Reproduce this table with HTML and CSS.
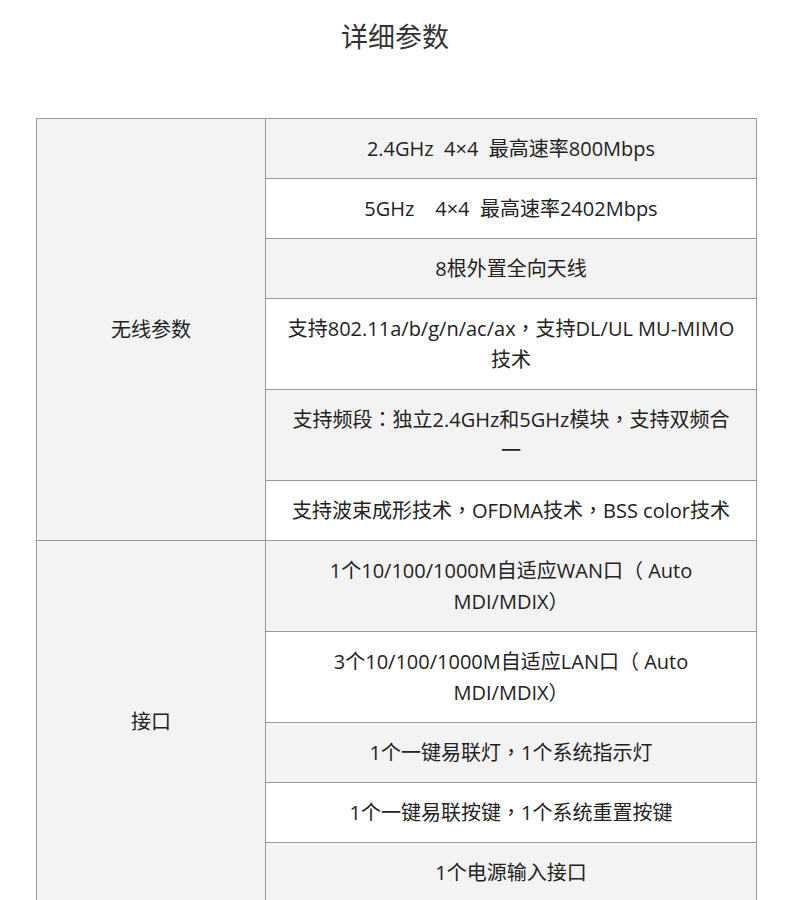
FILE: index.html
```html
<!DOCTYPE html>
<html lang="zh-CN">
<head>
<meta charset="utf-8">
<link rel="stylesheet" href="styles.css">
</head>
<body>
<h2 class="title">详细参数</h2>
<table class="spec">
  <colgroup><col class="c1"><col class="c2"></colgroup>
  <tbody>
    <tr class="g"><td class="label" rowspan="6">无线参数</td><td>2.4GHz&nbsp;&nbsp;4×4&nbsp;&nbsp;最高速率800Mbps</td></tr>
    <tr><td>5GHz&nbsp;&nbsp;&nbsp;&nbsp;4×4&nbsp;&nbsp;最高速率2402Mbps</td></tr>
    <tr class="g"><td>8根外置全向天线</td></tr>
    <tr><td>支持802.11a/b/g/n/ac/ax<span class="pun" lang="zh-TW">，</span>支持DL/UL MU-MIMO技术</td></tr>
    <tr class="g"><td>支持频段<span class="pun" lang="zh-TW">：</span>独立2.4GHz和5GHz模块<span class="pun" lang="zh-TW">，</span>支持双频合一</td></tr>
    <tr><td>支持波束成形技术<span class="pun" lang="zh-TW">，</span>OFDMA技术<span class="pun" lang="zh-TW">，</span>BSS color技术</td></tr>
    <tr class="g"><td class="label" rowspan="5">接口</td><td>1个10/100/1000M自适应WAN口（ Auto MDI/MDIX）</td></tr>
    <tr><td>3个10/100/1000M自适应LAN口（ Auto MDI/MDIX）</td></tr>
    <tr class="g"><td>1个一键易联灯<span class="pun" lang="zh-TW">，</span>1个系统指示灯</td></tr>
    <tr><td>1个一键易联按键<span class="pun" lang="zh-TW">，</span>1个系统重置按键</td></tr>
    <tr class="g"><td>1个电源输入接口</td></tr>
  </tbody>
</table>
</body>
</html>
```
FILE: styles.css
```css
html, body {
  margin: 0;
  padding: 0;
  background: #fff;
}
body {
  font-family: "Open Sans", "Noto Sans CJK SC", sans-serif;
  color: #222;
}
.title {
  margin: 0;
  padding-top: 20px;
  height: 118px;
  box-sizing: border-box;
  text-align: center;
  font-size: 27px;
  font-weight: normal;
  line-height: 34px;
  color: #333;
}
.spec {
  margin-left: 36px;
  width: 720px;
  border-collapse: collapse;
  table-layout: fixed;
}
.c1 { width: 229px; }
.c2 { width: 491px; }
.spec td {
  border: 1px solid #999;
  padding: 14px 17px;
  text-align: center;
  vertical-align: middle;
  font-size: 20px;
  line-height: 31px;
  background: #fff;
}
.spec tr.g td { background: #f3f3f3; }
.spec td.label { background: #f3f3f3; }
.pun {
  font-family: "Noto Sans CJK TC", "Noto Sans CJK SC", sans-serif;
  line-height: 1;
}
```
